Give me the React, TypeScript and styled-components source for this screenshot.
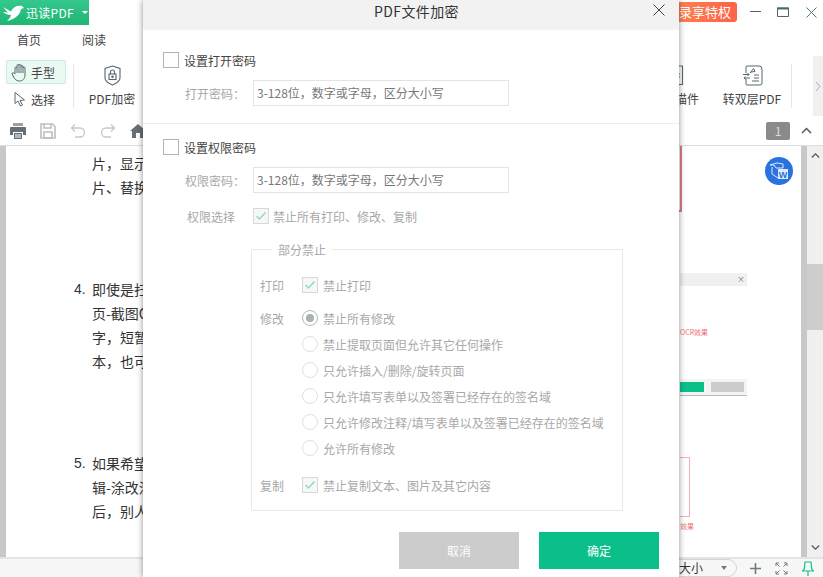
import React from 'react';
import styled, { createGlobalStyle } from 'styled-components';

const GlobalStyle = createGlobalStyle`
  html, body {
    margin: 0;
    padding: 0;
    width: 823px;
    height: 577px;
    overflow: hidden;
    background: #fff;
  }
  * {
    box-sizing: border-box;
  }
  body {
    font-family: "Noto Sans CJK SC", "Liberation Sans", sans-serif;
    font-size: 12px;
    color: #444;
  }
`;

const Page = styled.div`
  position: relative;
  display: flex;
  flex-direction: column;
  width: 823px;
  height: 577px;
  overflow: hidden;
`;

/* title bar */

const TitleBar = styled.div`
  display: flex;
  align-items: flex-start;
  height: 24px;
`;

const AppTab = styled.div`
  display: flex;
  align-items: center;
  flex: none;
  width: 89px;
  height: 25px;
  padding-left: 2px;
  background: linear-gradient(180deg, #35c88e, #1fb573);
  color: #fff;
  font-size: 12px;
  letter-spacing: 0.3px;
  white-space: nowrap;
  svg {
    margin-right: 2px;
  }
`;

const Caret = styled.span`
  width: 0;
  height: 0;
  margin-left: 8px;
  border-left: 3px solid transparent;
  border-right: 3px solid transparent;
  border-top: 3px solid #fff;
`;

const TitleRight = styled.div`
  display: flex;
  align-items: flex-start;
  margin-left: auto;
`;

const Promo = styled.div`
  width: 90px;
  height: 20px;
  margin: 2px 4px 0 0;
  padding-right: 6px;
  border-radius: 0 3px 3px 0;
  background: linear-gradient(90deg, #ff8f52, #ff6248);
  color: #fff;
  font-size: 13px;
  line-height: 20px;
  text-align: right;
  white-space: nowrap;
`;

const WindowButton = styled.div`
  display: flex;
  align-items: center;
  justify-content: center;
  width: 28px;
  height: 24px;
  &:last-child {
    margin-right: -2px;
  }
`;

/* ribbon */

const Tabs = styled.div`
  display: flex;
  height: 32px;
  padding: 8px 0 0 17px;
  gap: 41px;
  font-size: 12px;
  line-height: 16px;
`;

const Ribbon = styled.div`
  display: flex;
  height: 60px;
`;

const HandColumn = styled.div`
  display: flex;
  flex-direction: column;
  flex: none;
  width: 73px;
  padding: 4px 0 0 6px;
`;

const ModeButton = styled.div<{ $active?: boolean }>`
  display: flex;
  align-items: center;
  gap: 4px;
  width: 60px;
  height: 24px;
  margin-bottom: 3px;
  padding-left: 4px;
  border-radius: 2px;
  border: 1px solid ${p => (p.$active ? '#c5efdc' : 'transparent')};
  background: ${p => (p.$active ? '#ebf9f3' : 'transparent')};
  font-size: 12px;
`;

const ModeIcon = styled.span`
  display: flex;
  justify-content: center;
  width: 16px;
`;

const RibbonTool = styled.div<{ $width: number }>`
  display: flex;
  flex-direction: column;
  align-items: center;
  flex: none;
  width: ${p => p.$width}px;
  padding-top: 9px;
  font-size: 12px;
  line-height: 16px;
  white-space: nowrap;
  svg {
    margin-bottom: 5px;
  }
`;

const ScanTool = styled(RibbonTool)`
  margin-right: 14px;
  svg {
    margin-right: 11px;
  }
`;

const RibbonFill = styled.div`
  flex: 1;
`;

const RibbonDivider = styled.div<{ $after?: number }>`
  flex: none;
  width: 1px;
  height: 44px;
  margin: 8px ${p => p.$after ?? 0}px 0 0;
  background: #e6e6e6;
`;

const RibbonScroll = styled.div`
  display: flex;
  align-items: center;
  justify-content: center;
  flex: none;
  width: 10px;
  height: 60px;
  background: #f0f0f0;
`;

/* quick bar */

const QuickBar = styled.div`
  display: flex;
  align-items: center;
  height: 30px;
  padding: 0 0 0 10px;
  gap: 14px;
  border-bottom: 1px solid #dcdcdc;
`;

const PageBadge = styled.div`
  width: 24px;
  height: 18px;
  margin-left: auto;
  border-radius: 2px;
  background: #8a8a8a;
  color: #ddd;
  font-size: 12px;
  line-height: 18px;
  text-align: center;
`;

const PageUp = styled.div`
  display: flex;
  justify-content: center;
  width: 33px;
  margin-left: -14px;
`;

/* document */

const Body = styled.div`
  display: flex;
  flex: 1;
  min-height: 0;
`;

const LeftEdge = styled.div`
  width: 6px;
  background: #c8c8c8;
`;

const Doc = styled.div`
  display: grid;
  grid-template-columns: 674px 1fr;
  flex: 1;
  background: #fff;
`;

const TextColumn = styled.div`
  padding: 5px 0 0 68px;
  font-size: 14px;
  line-height: 24px;
  color: #333;
`;

const Paragraph = styled.div<{ $gap: number }>`
  margin-bottom: ${p => p.$gap}px;
`;

const Line = styled.div`
  display: flex;
  padding-left: 18px;
  white-space: nowrap;
`;

const NumberedLine = styled(Line)`
  padding-left: 0;
  span:first-child {
    width: 18px;
    font-family: "Liberation Sans", sans-serif;
  }
`;

const Figures = styled.div`
  display: flex;
  flex-direction: column;
  padding-right: 54px;
`;

const RedStrip = styled.div`
  width: 7px;
  height: 66px;
  margin-left: -5px;
  border: 1px solid #d9807f;
  border-width: 0 2px 2px 0;
  background: #fff;
`;

const GreyStrip = styled.div`
  position: relative;
  height: 13px;
  margin-top: 61px;
  background: #f0f0f0;
`;

const CloseMark = styled.span`
  position: absolute;
  right: 2px;
  top: 2px;
  font-size: 8px;
  line-height: 8px;
  color: #777;
`;

const RedCaption = styled.div<{ $top: number }>`
  height: 10px;
  margin-top: ${p => p.$top}px;
  font-size: 7px;
  line-height: 10px;
  color: #ee7272;
  white-space: nowrap;
`;

const ButtonStrip = styled.div`
  display: flex;
  align-items: center;
  gap: 7px;
  height: 17px;
  margin-top: 42px;
  border-bottom: 1px solid #bbb;
  background: #f4f4f4;
`;

const MiniButton = styled.div<{ $green?: boolean }>`
  width: ${p => (p.$green ? 24 : 33)}px;
  height: 10px;
  background: ${p => (p.$green ? '#0abf8a' : '#ccc')};
`;

const RedBox = styled.div`
  width: 10px;
  height: 60px;
  margin-top: 61px;
  border: 1px solid #eeb4b4;
  border-left: 0;
`;

const ScrollTrack = styled.div`
  display: flex;
  flex-direction: column;
  align-items: center;
  width: 22px;
  border-left: 6px solid #c8c8c8;
  background: #f0f0f0;
`;

const ScrollArrow = styled.div<{ $end?: boolean }>`
  display: flex;
  height: 19px;
  align-items: center;
  margin-top: ${p => (p.$end ? 'auto' : '0')};
`;

const ScrollThumb = styled.div`
  width: 16px;
  height: 66px;
  margin-top: 99px;
  background: #cdcdcd;
`;

const FloatBadge = styled.div`
  position: absolute;
  top: 157px;
  left: 765px;
  display: flex;
  align-items: center;
  justify-content: center;
  width: 28px;
  height: 28px;
  border-radius: 50%;
  background: #2a72de;
`;

/* status bar */

const StatusBar = styled.div`
  display: flex;
  align-items: center;
  height: 20px;
  border-top: 2px solid #e4e4e8;
  background: #f7f7f7;
`;

const ZoomSelect = styled.div`
  display: flex;
  align-items: center;
  justify-content: space-between;
  width: 60px;
  height: 18px;
  margin-left: 677px;
  padding: 0 9px 0 2px;
  border: 1px solid #d4d4d4;
  border-left: 0;
  border-radius: 0 9px 9px 0;
  font-size: 12px;
  line-height: 16px;
  color: #333;
`;

const DownCaret = styled.span`
  width: 0;
  height: 0;
  border-left: 3px solid transparent;
  border-right: 3px solid transparent;
  border-top: 4px solid #6f7c82;
`;

const StatusIcons = styled.div`
  display: flex;
  align-items: center;
  gap: 14px;
  margin-left: 13px;
`;

/* dialog */

const Dialog = styled.div`
  position: absolute;
  top: 0;
  left: 143px;
  display: flex;
  flex-direction: column;
  width: 536px;
  height: 577px;
  background: #fff;
  box-shadow: 0 0 6px rgba(0, 0, 0, 0.45);
`;

const DialogHeader = styled.div`
  position: relative;
  height: 30px;
  padding-left: 11px;
  background: #f2f2f2;
  font-size: 14px;
  letter-spacing: 0.4px;
  line-height: 22px;
  text-align: center;
  color: #333;
`;

const DialogClose = styled.div`
  position: absolute;
  top: 4px;
  right: 14px;
  display: flex;
`;

const Section = styled.div`
  padding: 0 0 0 20px;
`;

const OpenSection = styled(Section)`
  height: 94px;
  padding-top: 22px;
  border-bottom: 1px solid #ececec;
`;

const PermSection = styled(Section)`
  padding-top: 15px;
`;

const Check = styled.span<{ $disabled?: boolean }>`
  display: flex;
  align-items: center;
  justify-content: center;
  flex: none;
  width: 16px;
  height: 16px;
  border: 1px solid ${p => (p.$disabled ? '#d8d8d8' : '#b4b4b4')};
  background: ${p => (p.$disabled ? '#f7f7f7' : '#fff')};
`;

const CheckRow = styled.label`
  display: flex;
  align-items: center;
  gap: 5px;
  height: 16px;
  font-size: 12px;
  color: #444;
`;

const FieldRow = styled.div<{ $top: number }>`
  display: flex;
  align-items: center;
  height: 26px;
  margin-top: ${p => p.$top}px;
  padding-left: 21px;
`;

const FieldLabel = styled.span`
  width: 69px;
  padding-left: 1px;
  font-size: 12px;
  color: #a8a8a8;
  white-space: nowrap;
`;

const FakeInput = styled.div`
  width: 256px;
  height: 26px;
  padding-left: 3px;
  border: 1px solid #e4e4e4;
  font-size: 12px;
  line-height: 24px;
  color: #777;
  white-space: nowrap;
`;

const SelectRow = styled.div`
  display: flex;
  align-items: center;
  height: 16px;
  margin-top: 15px;
  padding-left: 24px;
  font-size: 12px;
  color: #a8a8a8;
`;

const SelectLabel = styled.span`
  width: 66px;
`;

const DisabledText = styled.span`
  margin-left: 4px;
  color: #a8a8a8;
  white-space: nowrap;
`;

const OptionText = styled(DisabledText)`
  margin-left: 5px;
`;

const PartGroup = styled.div`
  position: relative;
  width: 372px;
  height: 262px;
  margin: 25px 0 0 88px;
  padding: 27px 0 0 8px;
  border: 1px solid #eaeaea;
`;

const Legend = styled.span`
  position: absolute;
  top: -8px;
  left: 20px;
  padding: 0 6px;
  background: #fff;
  font-size: 12px;
  line-height: 16px;
  color: #a8a8a8;
`;

const OptionRow = styled.div<{ $top?: number }>`
  display: flex;
  align-items: center;
  height: 16px;
  margin-top: ${p => p.$top ?? 10}px;
  font-size: 12px;
  color: #a8a8a8;
  white-space: nowrap;
`;

const OptionLabel = styled.span`
  width: 42px;
`;

const Radio = styled.span<{ $on?: boolean }>`
  display: flex;
  align-items: center;
  justify-content: center;
  flex: none;
  width: 16px;
  height: 16px;
  border: 1px solid ${p => (p.$on ? '#b0b8b8' : '#e0e0e0')};
  border-radius: 50%;
  &::after {
    content: '';
    display: ${p => (p.$on ? 'block' : 'none')};
    width: 8px;
    height: 8px;
    border-radius: 50%;
    background: #a8b2b2;
  }
`;

const DialogFooter = styled.div`
  display: flex;
  justify-content: flex-end;
  gap: 20px;
  margin-top: 21px;
  padding-right: 20px;
`;

const FooterButton = styled.div<{ $primary?: boolean }>`
  width: 120px;
  height: 37px;
  background: ${p => (p.$primary ? '#0abf8a' : '#cccccc')};
  color: #fff;
  font-size: 12px;
  line-height: 37px;
  text-align: center;
`;

const Tick = () => (
  <svg width="12" height="10" viewBox="0 0 12 10" fill="none">
    <path d="M1.5 5 L4.5 8 L10.5 1.5" stroke="#8fdcb0" strokeWidth="1.4" />
  </svg>
);

const Logo = () => (
  <svg width="22" height="18" viewBox="0 0 22 18" fill="#fff">
    <path d="M1 3 L9 7.5 C11 3 15 1 20 2 L22 4 L19 5 C18 11 13 15 5 17 C8 14 9 12 9 11 C6 11 3 10 1 8 L6 8.5 Z" />
  </svg>
);

const HandIcon = () => (
  <svg width="16" height="19" viewBox="0 0 16 19" fill="none" stroke="#55686f" strokeWidth="1">
    <path d="M4 11 V5 a1 1 0 0 1 2 0 V2.5 a1 1 0 0 1 2 0 V2.5 a1 1 0 0 1 2 0 V3.5 a1 1 0 0 1 2 0 V5 a1 1 0 0 1 2 0 V12 C14 15.5 12 18 8.5 18 C5.5 18 4 16.5 2.5 14 L1 10.5 C1 9.5 3 9.5 4 11 Z" />
    <path d="M6 5 V10 M8 2.5 V10 M10 3 V10 M12 4 V10" />
  </svg>
);

const ArrowIcon = () => (
  <svg width="13" height="16" viewBox="0 0 13 16" fill="none" stroke="#55686f" strokeWidth="1">
    <path d="M2 1.5 L2 12.5 L5 10 L7.5 15 L9.5 14 L7 9.5 L11.5 9 Z" />
  </svg>
);

const ShieldIcon = () => (
  <svg width="17" height="21" viewBox="0 0 17 21" fill="none" stroke="#55686f" strokeWidth="1.1">
    <path d="M8.5 1 L16 3.5 V13 C16 16 12 18.5 8.5 20 C5 18.5 1 16 1 13 V3.5 Z" />
    <rect x="5" y="9" width="7" height="5.5" />
    <path d="M6.5 9 V7 a2 2 0 0 1 4 0 V9" />
    <circle cx="8.5" cy="11.7" r="0.7" fill="#55686f" />
  </svg>
);

const ScanIcon = () => (
  <svg width="17" height="21" viewBox="0 0 17 21" fill="none" stroke="#55686f" strokeWidth="1.1">
    <path d="M5 1 H1.5 V5 M12 1 H15.5 V19.5 H12 M1.5 15 V19.5 H5" />
    <path d="M4 9 H13 M4 12 H13" />
  </svg>
);

const DoublePdfIcon = () => (
  <svg width="21" height="21" viewBox="0 0 21 21" fill="none" stroke="#55686f" strokeWidth="1">
    <path d="M4 8 V2 Q4 1 5 1 H17 Q20 1 20 4 V18 Q20 20 18 20 H5 Q4 20 4 19 V14" />
    <path d="M1 9.5 H7 M5.5 8 L7 9.5 L5.5 11 M8 13 H2 M3.5 11.5 L2 13 L3.5 14.5" />
    <path d="M8 8 L11.5 3.5 L13 6.5 L9 7 M12 10 H17 M12 13 H17 M10 16 H17" />
  </svg>
);

const PrintIcon = () => (
  <svg width="16" height="16" viewBox="0 0 16 16">
    <path fill="#9aa0a4" d="M3 0 H13 V3 H3 Z" />
    <path fill="#666f75" d="M1 4 H15 Q16 4 16 5 V12 H13 V9 H3 V12 H0 V5 Q0 4 1 4 Z" />
    <path fill="#666f75" d="M4 10 H12 V16 H4 Z" />
    <path stroke="#fff" strokeWidth="1" d="M5 12 H11 M5 14 H11" />
  </svg>
);

const SaveIcon = () => (
  <svg width="16" height="16" viewBox="0 0 16 16" fill="none" stroke="#bfbfbf" strokeWidth="1.6">
    <path d="M1 1 H12.5 L15 3.5 V15 H1 Z" />
    <path d="M4 1 V5 H11 V1" />
    <rect x="4" y="9" width="8" height="6" />
  </svg>
);

const UndoIcon = ({ $flip }: { $flip?: boolean }) => (
  <svg width="16" height="15" viewBox="0 0 16 15" fill="none" stroke="#c8c8c8" strokeWidth="1.3"
    transform={$flip ? 'scale(-1 1)' : undefined}>
    <path d="M1.5 5 H10 a4.5 4.5 0 0 1 0 9 H5" />
    <path d="M5 1.5 L1.5 5 L5 8.5" />
  </svg>
);

const HomeIcon = () => (
  <svg width="16" height="14" viewBox="0 0 16 14" fill="#666f75">
    <path d="M8 0 L16 7 H14 V14 H10 V9 H6 V14 H2 V7 H0 Z" />
  </svg>
);

const Chevron = ({ up, color = '#55595c', width = 11 }: { up: boolean; color?: string; width?: number }) => (
  <svg width={width} height="7" viewBox="0 0 11 7" fill="none" stroke={color} strokeWidth="1.5">
    <path d={up ? 'M1 6 L5.5 1.5 L10 6' : 'M1 1 L5.5 5.5 L10 1'} />
  </svg>
);

const WordBadgeIcon = () => (
  <svg width="20" height="19" viewBox="0 0 20 19" fill="none" stroke="#dfeafb" strokeWidth="1">
    <path d="M1 3 L8 1 L14 2 V6 H7 L5 3 Z" />
    <path d="M3 5 V12 L9 16" />
    <rect x="9" y="7" width="10" height="10" fill="#dfeafb" stroke="none" />
    <text x="14" y="15.5" textAnchor="middle" fontFamily="Liberation Sans" fontSize="9" fontWeight="700" fill="#2a72de" stroke="none">W</text>
  </svg>
);

const ExpandIcon = () => (
  <svg width="13" height="13" viewBox="0 0 13 13" fill="none" stroke="#6f7c82" strokeWidth="1">
    <path d="M1 4 V1 H4 M1 1 L4.5 4.5 M9 1 H12 V4 M12 1 L8.5 4.5 M1 9 V12 H4 M1 12 L4.5 8.5 M9 12 H12 V9 M12 12 L8.5 8.5" />
  </svg>
);

const PinIcon = () => (
  <svg width="12" height="15" viewBox="0 0 12 15" fill="none" stroke="#12bf8c" strokeWidth="1.2">
    <path d="M3 1 H9 L9.7 8 L11.5 10 H0.5 L2.3 8 Z M6 10 V15" />
  </svg>
);

const PlusIcon = () => (
  <svg width="11" height="11" viewBox="0 0 11 11" stroke="#6f7c82" strokeWidth="1.6">
    <path d="M5.5 0 V11 M0 5.5 H11" />
  </svg>
);

const CloseIcon = ({ size, color }: { size: number; color: string }) => (
  <svg width={size} height={size} viewBox="0 0 12 12" stroke={color} strokeWidth="1" fill="none">
    <path d="M0.5 0.5 L11.5 11.5 M11.5 0.5 L0.5 11.5" />
  </svg>
);

const placeholder = '3-128位，数字或字母，区分大小写';

const modifyOptions = [
  '禁止提取页面但允许其它任何操作',
  '只允许插入/删除/旋转页面',
  '只允许填写表单以及签署已经存在的签名域',
  '只允许修改注释/填写表单以及签署已经存在的签名域',
  '允许所有修改',
];

export default function App() {
  return (
    <Page>
      <GlobalStyle />
      <TitleBar>
        <AppTab>
          <Logo />
          迅读PDF
          <Caret />
        </AppTab>
        <TitleRight>
          <Promo>登录享特权</Promo>
          <WindowButton>
            <svg width="11" height="2"><rect width="11" height="1" fill="#4a6a72" /></svg>
          </WindowButton>
          <WindowButton>
            <svg width="12" height="10" fill="none" stroke="#4a6a72">
              <path d="M0.5 1 H11.5 V9.5 H0.5 Z" />
              <path d="M0 1.5 H12" strokeWidth="2" />
            </svg>
          </WindowButton>
          <WindowButton>
            <CloseIcon size={11} color="#4a6a72" />
          </WindowButton>
        </TitleRight>
      </TitleBar>
      <Tabs>
        <span>首页</span>
        <span>阅读</span>
      </Tabs>
      <Ribbon>
        <HandColumn>
          <ModeButton $active>
            <ModeIcon><HandIcon /></ModeIcon>
            手型
          </ModeButton>
          <ModeButton>
            <ModeIcon><ArrowIcon /></ModeIcon>
            选择
          </ModeButton>
        </HandColumn>
        <RibbonDivider />
        <RibbonTool $width={76}>
          <ShieldIcon />
          PDF加密
        </RibbonTool>
        <RibbonFill />
        <ScanTool $width={36}>
          <ScanIcon />
          扫描件
        </ScanTool>
        <RibbonTool $width={78}>
          <DoublePdfIcon />
          转双层PDF
        </RibbonTool>
        <RibbonDivider $after={21} />
        <RibbonScroll>
          <svg width="6" height="11" fill="none" stroke="#a9b0b2">
            <path d="M1 1 L5 5.5 L1 10" />
          </svg>
        </RibbonScroll>
      </Ribbon>
      <QuickBar>
        <PrintIcon />
        <SaveIcon />
        <UndoIcon />
        <UndoIcon $flip />
        <HomeIcon />
        <PageBadge>1</PageBadge>
        <PageUp>
          <Chevron up width={11} />
        </PageUp>
      </QuickBar>
      <Body>
        <LeftEdge />
        <Doc>
          <TextColumn>
            <Paragraph $gap={78}>
              <Line>片，显示</Line>
              <Line>片、替换</Line>
            </Paragraph>
            <Paragraph $gap={78}>
              <NumberedLine>
                <span>4.</span>
                <span>即使是扫</span>
              </NumberedLine>
              <Line>页-截图O</Line>
              <Line>字，短暂</Line>
              <Line>本，也可</Line>
            </Paragraph>
            <Paragraph $gap={0}>
              <NumberedLine>
                <span>5.</span>
                <span>如果希望</span>
              </NumberedLine>
              <Line>辑-涂改涂</Line>
              <Line>后，别人</Line>
            </Paragraph>
          </TextColumn>
          <Figures>
            <RedStrip />
            <GreyStrip>
              <CloseMark>×</CloseMark>
            </GreyStrip>
            <RedCaption $top={41}>OCR效果</RedCaption>
            <ButtonStrip>
              <MiniButton $green />
              <MiniButton />
            </ButtonStrip>
            <RedBox />
            <RedCaption $top={4}>效果</RedCaption>
          </Figures>
        </Doc>
        <ScrollTrack>
          <ScrollArrow>
            <Chevron up color="#555" width={9} />
          </ScrollArrow>
          <ScrollThumb />
          <ScrollArrow $end>
            <Chevron up={false} color="#555" width={9} />
          </ScrollArrow>
        </ScrollTrack>
      </Body>
      <FloatBadge>
        <WordBadgeIcon />
      </FloatBadge>
      <StatusBar>
        <ZoomSelect>
          大小
          <DownCaret />
        </ZoomSelect>
        <StatusIcons>
          <PlusIcon />
          <ExpandIcon />
          <PinIcon />
        </StatusIcons>
      </StatusBar>
      <Dialog>
        <DialogHeader>
          PDF文件加密
          <DialogClose>
            <CloseIcon size={12} color="#444" />
          </DialogClose>
        </DialogHeader>
        <OpenSection>
          <CheckRow>
            <Check />
            设置打开密码
          </CheckRow>
          <FieldRow $top={12}>
            <FieldLabel>打开密码：</FieldLabel>
            <FakeInput>{placeholder}</FakeInput>
          </FieldRow>
        </OpenSection>
        <PermSection>
          <CheckRow>
            <Check />
            设置权限密码
          </CheckRow>
          <FieldRow $top={12}>
            <FieldLabel>权限密码：</FieldLabel>
            <FakeInput>{placeholder}</FakeInput>
          </FieldRow>
          <SelectRow>
            <SelectLabel>权限选择</SelectLabel>
            <Check $disabled><Tick /></Check>
            <DisabledText>禁止所有打印、修改、复制</DisabledText>
          </SelectRow>
          <PartGroup>
            <Legend>部分禁止</Legend>
            <OptionRow $top={0}>
              <OptionLabel>打印</OptionLabel>
              <Check $disabled><Tick /></Check>
              <OptionText>禁止打印</OptionText>
            </OptionRow>
            <OptionRow $top={17}>
              <OptionLabel>修改</OptionLabel>
              <Radio $on />
              <OptionText>禁止所有修改</OptionText>
            </OptionRow>
            {modifyOptions.map(text => (
              <OptionRow key={text}>
                <OptionLabel />
                <Radio />
                <OptionText>{text}</OptionText>
              </OptionRow>
            ))}
            <OptionRow $top={21}>
              <OptionLabel>复制</OptionLabel>
              <Check $disabled><Tick /></Check>
              <OptionText>禁止复制文本、图片及其它内容</OptionText>
            </OptionRow>
          </PartGroup>
        </PermSection>
        <DialogFooter>
          <FooterButton>取消</FooterButton>
          <FooterButton $primary>确定</FooterButton>
        </DialogFooter>
      </Dialog>
    </Page>
  );
}
